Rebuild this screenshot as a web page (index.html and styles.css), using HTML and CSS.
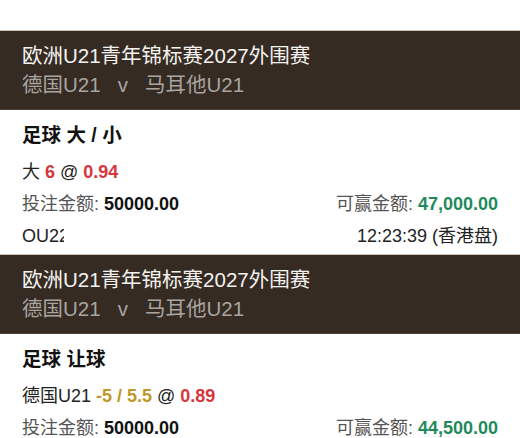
FILE: index.html
```html
<!DOCTYPE html>
<html lang="zh-CN">
<head>
    <meta charset="UTF-8">
    <meta name="viewport" content="width=device-width, initial-scale=1.0">
    <title>注单</title>
    <link rel="stylesheet" href="styles.css">
</head>
<body>
    <div class="bet">
        <div class="bet-header">
            <div class="league">欧洲U21青年锦标赛2027外围赛</div>
            <div class="teams">德国U21&nbsp;&nbsp;&nbsp;v&nbsp;&nbsp;&nbsp;马耳他U21</div>
        </div>
        <div class="bet-body">
            <div class="market">足球 大 / 小</div>
            <div class="row">
                <span>大 <span class="red">6</span> @ <span class="red">0.94</span></span>
            </div>
            <div class="row">
                <span class="label">投注金额: <b class="amount">50000.00</b></span>
                <span class="label">可赢金额: <b class="win">47,000.00</b></span>
            </div>
            <div class="row">
                <span class="ref">OU22857301</span>
                <span>12:23:39 (香港盘)</span>
            </div>
        </div>
    </div>

    <div class="bet">
        <div class="bet-header">
            <div class="league">欧洲U21青年锦标赛2027外围赛</div>
            <div class="teams">德国U21&nbsp;&nbsp;&nbsp;v&nbsp;&nbsp;&nbsp;马耳他U21</div>
        </div>
        <div class="bet-body">
            <div class="market">足球 让球</div>
            <div class="row">
                <span>德国U21 <span class="gold">-5 / 5.5</span> @ <span class="red">0.89</span></span>
            </div>
            <div class="row">
                <span class="label">投注金额: <b class="amount">50000.00</b></span>
                <span class="label">可赢金额: <b class="win">44,500.00</b></span>
            </div>
        </div>
    </div>
</body>
</html>
```

FILE: styles.css
```css
body {
    font-family: 'Liberation Sans', 'Noto Sans CJK SC', sans-serif;
    margin: 0;
    padding: 30px 0 0;
    background-color: #fff;
    color: #222;
    overflow: hidden;
}

.bet-header {
    box-sizing: border-box;
    height: 80px;
    padding: 10px 22px 11px;
    background-color: #362b23;
    border-top: 1px solid #c9c5c1;
    border-bottom: 1px solid #4a4038;
}

.league {
    font-size: 20.5px;
    line-height: 29px;
    color: #f4f2f0;
}

.teams {
    font-size: 20.5px;
    line-height: 29px;
    color: #a8a4a0;
}

.bet-body {
    padding: 10px 22px 2px;
}

.market {
    font-size: 19.5px;
    font-weight: bold;
    line-height: 30px;
    margin-bottom: 6px;
    color: #111;
}

.row {
    display: flex;
    justify-content: space-between;
    font-size: 18px;
    line-height: 32px;
}

.label {
    color: #555;
}

.amount {
    color: #111;
}

.win {
    color: #1f8a5c;
}

.red {
    color: #d8363c;
    font-weight: bold;
}

.gold {
    color: #c0982c;
    font-weight: bold;
}

.ref {
    display: inline-block;
    width: 42px;
    overflow: hidden;
    white-space: nowrap;
}
```
